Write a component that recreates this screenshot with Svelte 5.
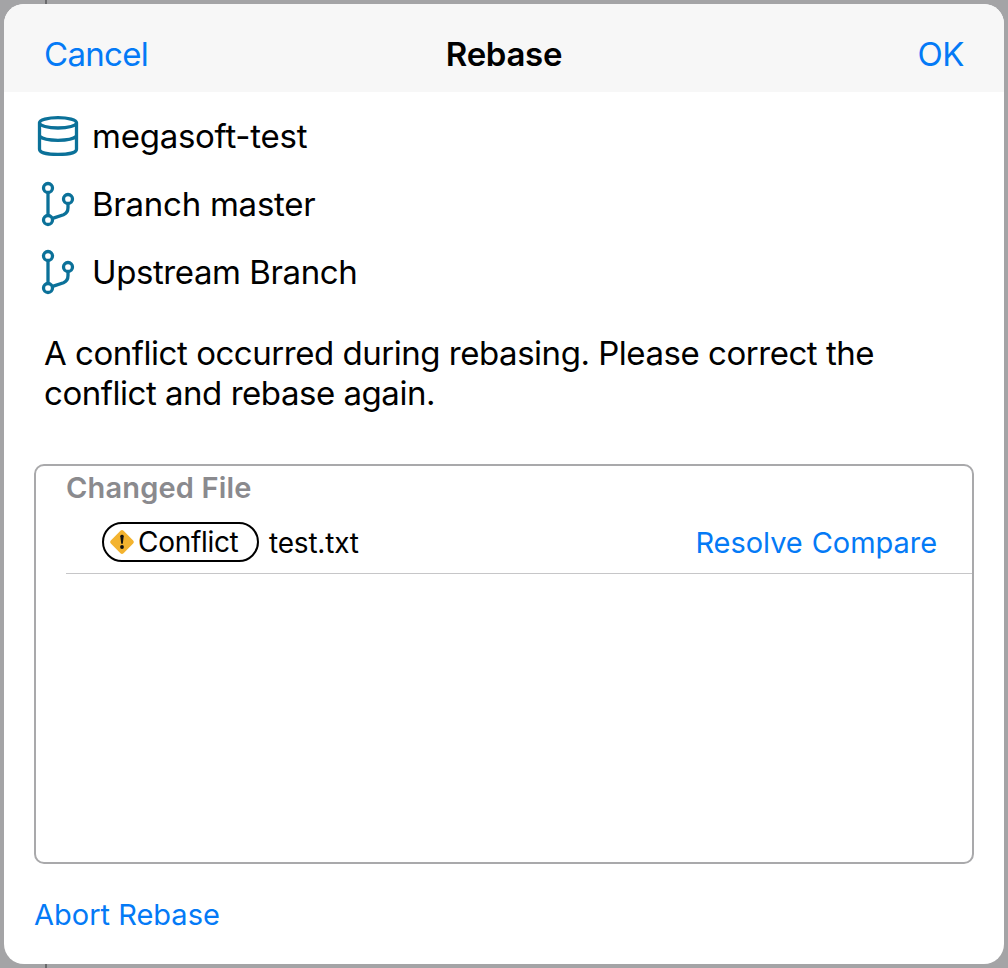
<script lang="ts">
  const targets = [
    { icon: 'repo', label: 'megasoft-test' },
    { icon: 'branch', label: 'Branch master' },
    { icon: 'branch', label: 'Upstream Branch' }
  ];
  const files = [{ status: 'Conflict', name: 'test.txt' }];
</script>

<div class="backdrop">
  <div class="sheet" role="dialog" aria-label="Rebase">
    <header class="bar">
      <button class="cancel">Cancel</button>
      <h1>Rebase</h1>
      <button class="ok">OK</button>
    </header>

    <ul class="targets">
      {#each targets as t}
        <li>
          {#if t.icon === 'repo'}
            <svg class="icon" viewBox="0 0 48 48" aria-hidden="true">
              <ellipse cx="24" cy="10.8" rx="18.5" ry="5.2" />
              <path d="M5.5 10.8V37.2C5.5 40.5 13.5 42.4 24 42.4S42.5 40.5 42.5 37.2V10.8" />
              <path d="M5.5 24.3C8.5 27.1 15.5 28.3 24 28.3S39.5 27.1 42.5 24.3" />
            </svg>
          {:else}
            <svg class="icon" viewBox="0 0 48 48" aria-hidden="true">
              <circle cx="14" cy="8" r="4.5" />
              <circle cx="34" cy="19" r="4.5" />
              <circle cx="14" cy="40" r="4.5" />
              <path d="M14 12.7V35.3M34 23.7V27.5C34 31.5 32.8 33.4 29.5 34.7L18.6 38.4" />
            </svg>
          {/if}
          <span>{t.label}</span>
        </li>
      {/each}
    </ul>

    <p class="message">A conflict occurred during rebasing. Please correct the<br />conflict and rebase again.</p>

    <section class="files">
      <h2>Changed File</h2>
      {#each files as f}
        <div class="row">
          <span class="badge">
            <svg viewBox="0 0 26 26" aria-hidden="true">
              <rect x="4" y="4" width="18" height="18" rx="2.2" transform="rotate(45 13 13)" />
              <path d="M11.3 7.2Q11.3 5.8 13 5.8T14.7 7.2L13.8 14.8H12.2Z" />
              <circle cx="13" cy="18" r="1.9" />
            </svg>
            <span class="status">{f.status}</span>
          </span>
          <span class="name">{f.name}</span>
          <span class="actions">
            <button>Resolve</button>
            <button>Compare</button>
          </span>
        </div>
      {/each}
    </section>

    <footer><button>Abort Rebase</button></footer>
  </div>
</div>

<style>
  :global(body) { margin: 0; }

  .backdrop {
    box-sizing: border-box;
    height: 968px;
    padding: 4px;
    /* divider of the split view behind the sheet */
    background: linear-gradient(90deg, transparent 45px, #6b6b6d 45px, #6b6b6d 47px, transparent 47px), #a4a4a6;
    font-family: Inter, 'Liberation Sans', sans-serif;
    color: #000;
  }
  .sheet {
    display: flex;
    flex-direction: column;
    height: 960px;
    overflow: hidden;
    border-radius: 20px;
    background: #fff;
  }
  button {
    padding: 0;
    border: 0;
    background: none;
    font: inherit;
    letter-spacing: inherit;
    white-space: nowrap;
    color: #047af6;
  }
  h1, h2, p, ul { margin: 0; padding: 0; }

  .bar {
    display: grid;
    grid-template-columns: 1fr auto 1fr;
    align-items: center;
    height: 88px;
    padding: 12px 40px 0;
    box-sizing: border-box;
    background: #f7f7f7;
    font-size: 33px;
  }
  .bar h1 { font-size: 33px; font-weight: 600; letter-spacing: -0.3px; }
  .cancel { justify-self: start; letter-spacing: -0.7px; }
  .ok { justify-self: end; letter-spacing: -0.4px; }

  .targets { padding-top: 10px; list-style: none; font-size: 33px; letter-spacing: -0.25px; }
  .targets li {
    display: flex;
    align-items: center;
    gap: 10px;
    height: 68px;
    padding-left: 30px;
    white-space: nowrap;
  }
  .targets li:last-child { letter-spacing: -0.42px; }
  .icon { width: 48px; height: 48px; fill: none; stroke: #0b7199; stroke-width: 3.3; }

  .message {
    padding: 27px 40px 0;
    font-size: 33px;
    line-height: 40px;
    letter-spacing: -0.47px;
    white-space: nowrap;
  }

  .files {
    box-sizing: border-box;
    height: 400px;
    margin: 51px 30px 0;
    padding-left: 30px;
    border: 2px solid #a9a9ab;
    border-radius: 10px;
  }
  .files h2 {
    height: 44px;
    font-size: 29px;
    font-weight: 600;
    line-height: 44px;
    letter-spacing: 0.17px;
    color: #8a8a8e;
  }
  .row {
    display: flex;
    align-items: center;
    height: 63px;
    padding: 0 35px 0 36px;
    border-bottom: 1px solid #c6c6c8;
    font-size: 28px;
    letter-spacing: -0.3px;
  }
  .badge {
    display: flex;
    align-items: center;
    gap: 3px;
    box-sizing: border-box;
    width: 157px;
    height: 40px;
    padding-left: 5px;
    border: 2px solid #000;
    border-radius: 20px;
  }
  .badge svg { width: 26px; height: 26px; fill: #111; }
  .badge rect { fill: #f3b32f; }
  .status { padding-top: 1px; }
  .name { margin-left: 10px; padding-top: 2px; letter-spacing: -0.2px; }
  .actions { display: flex; gap: 9px; margin-left: auto; padding-top: 2px; font-size: 29px; letter-spacing: -0.05px; }

  footer { padding: 33px 30px 0; font-size: 29px; }
</style>
